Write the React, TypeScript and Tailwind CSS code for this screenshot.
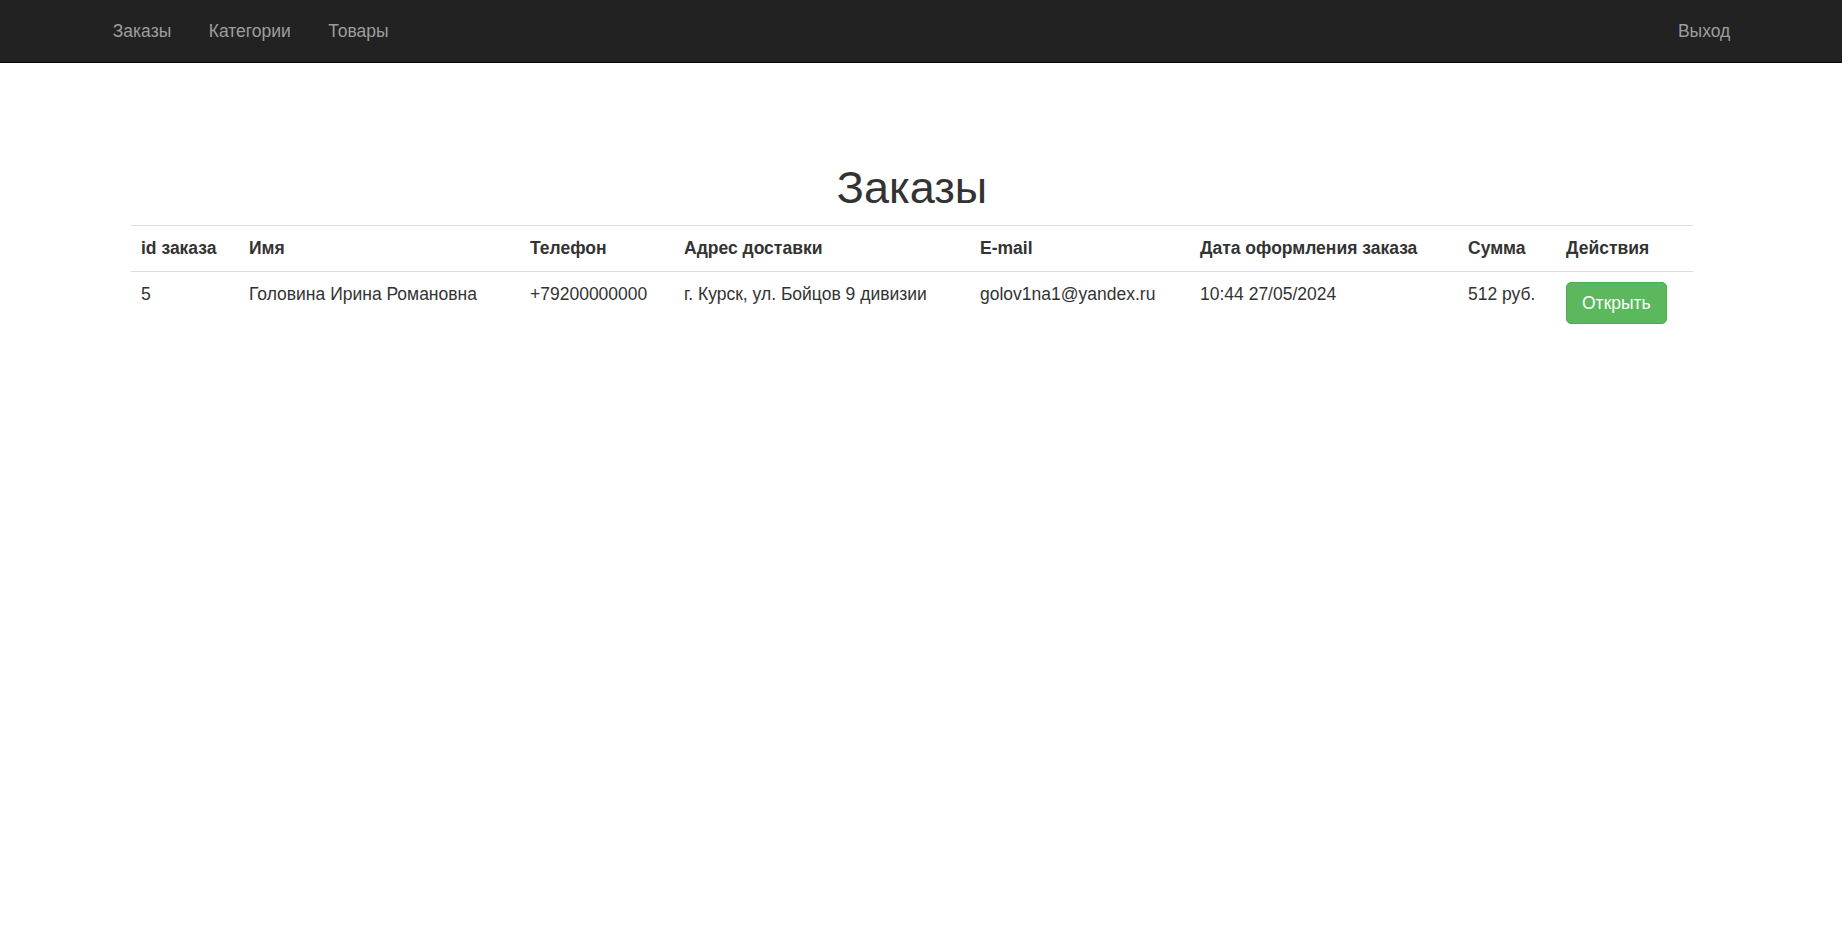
const navLinks = ['Заказы', 'Категории', 'Товары'];

const columns = [
  { title: 'id заказа', width: 'w-[108px]' },
  { title: 'Имя', width: 'w-[281px]' },
  { title: 'Телефон', width: 'w-[154px]' },
  { title: 'Адрес доставки', width: 'w-[296px]' },
  { title: 'E-mail', width: 'w-[220px]' },
  { title: 'Дата оформления заказа', width: 'w-[268px]' },
  { title: 'Сумма', width: 'w-[98px]' },
  { title: 'Действия', width: 'w-[137px]' },
];

const orders = [
  {
    id: 5,
    name: 'Головина Ирина Романовна',
    phone: '+79200000000',
    address: 'г. Курск, ул. Бойцов 9 дивизии',
    email: 'golov1na1@yandex.ru',
    date: '10:44 27/05/2024',
    total: '512 руб.',
  },
];

const cell = 'border-t border-[#ddd] px-[10px] py-[10px] leading-[25px] align-top text-left';

export default function App() {
  return (
    <div className="min-h-[930px] bg-white text-[17.5px] text-[#333] font-['Liberation_Sans',Arial,sans-serif]">
      {/* Navbar */}
      <nav className="h-[63px] bg-[#222] border-b border-[#080808] flex items-start justify-between pl-[94px] pr-[93px]">
        <ul className="flex">
          {navLinks.map((link) => (
            <li key={link}>
              <a href="#" className="block px-[18.75px] pt-[18.75px] leading-[25px] text-[#9d9d9d] hover:text-white">
                {link}
              </a>
            </li>
          ))}
        </ul>
        <a href="#" className="block px-[18.75px] pt-[18.75px] leading-[25px] text-[#9d9d9d] hover:text-white">
          Выход
        </a>
      </nav>

      {/* Orders */}
      <div className="ml-[131px] w-[1562px] pt-[100px]">
        <h1 className="text-center text-[45px] leading-[49.5px] font-normal mb-[12.5px] text-[#333]">Заказы</h1>
        <table className="w-full table-fixed border-collapse">
          <colgroup>
            {columns.map((col) => (
              <col key={col.title} className={col.width} />
            ))}
          </colgroup>
          <tbody>
            <tr>
              {columns.map((col) => (
                <th key={col.title} className={`${cell} font-bold`}>
                  {col.title}
                </th>
              ))}
            </tr>
            {orders.map((order) => (
              <tr key={order.id}>
                <td className={cell}>{order.id}</td>
                <td className={cell}>{order.name}</td>
                <td className={cell}>{order.phone}</td>
                <td className={cell}>{order.address}</td>
                <td className={cell}>{order.email}</td>
                <td className={cell}>{order.date}</td>
                <td className={cell}>{order.total}</td>
                <td className={cell}>
                  <button className="inline-block rounded-[5px] border border-[#4cae4c] bg-[#5cb85c] px-[15px] py-[7.5px] leading-[25px] text-white hover:bg-[#449d44]">
                    Открыть
                  </button>
                </td>
              </tr>
            ))}
          </tbody>
        </table>
      </div>
    </div>
  );
}
